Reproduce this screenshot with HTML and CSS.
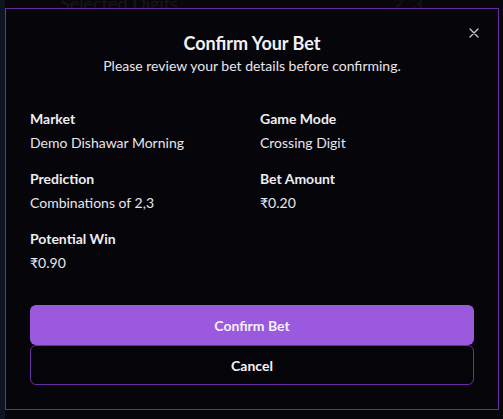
FILE: index.html
```html
<!DOCTYPE html>
<html lang="en">
<head>
<meta charset="utf-8">
<title>Confirm Your Bet</title>
<link rel="stylesheet" href="styles.css">
</head>
<body>
<div class="page">
  <div class="sidebar"></div>
  <div class="content">
    <div class="bg-row">
      <span class="bg-label">Selected Digits</span>
      <span class="bg-value">2, 3</span>
    </div>
  </div>
</div>
<div class="overlay"></div>
<div class="modal" role="dialog">
  <button class="close" aria-label="Close">
    <svg width="10" height="10" viewBox="0 0 10 10"><path d="M1 1L9 9M9 1L1 9" stroke="#c9c9d1" stroke-width="1.3" stroke-linecap="round"/></svg>
  </button>
  <div class="header">
    <h2 class="title">Confirm Your Bet</h2>
    <p class="subtitle">Please review your bet details before confirming.</p>
  </div>
  <div class="details">
    <div class="item"><div class="label">Market</div><div class="value">Demo Dishawar Morning</div></div>
    <div class="item"><div class="label">Game Mode</div><div class="value">Crossing Digit</div></div>
    <div class="item"><div class="label">Prediction</div><div class="value">Combinations of 2,3</div></div>
    <div class="item"><div class="label">Bet Amount</div><div class="value">₹0.20</div></div>
    <div class="item"><div class="label">Potential Win</div><div class="value">₹0.90</div></div>
  </div>
  <div class="actions">
    <button class="btn btn-primary">Confirm Bet</button>
    <button class="btn btn-outline">Cancel</button>
  </div>
</div>
</body>
</html>
```
FILE: styles.css
```css
* { box-sizing: border-box; }
html, body { margin: 0; padding: 0; }
body {
  width: 503px;
  height: 419px;
  overflow: hidden;
  background: #07070b;
  font-family: "Lato", "Noto Sans", sans-serif;
  color: #ececf1;
}
.page {
  display: flex;
  height: 100%;
}
.sidebar {
  width: 5px;
  background: #111827;
}
.content {
  flex: 1;
  background: #09090e;
}
.bg-row {
  display: flex;
  justify-content: space-between;
  padding: 0 80px 0 55px;
  margin-top: -8px;
  font-size: 18px;
  color: #1a1a20;
}
.overlay {
  position: fixed;
  inset: 0;
  background: rgba(0,0,0,0.15);
}
.modal {
  position: fixed;
  left: 5px;
  top: 8px;
  width: 494px;
  height: 402px;
  background: #06050a;
  border: 1px solid #6a2ea3;
  padding: 21px 24px 24px;
  display: flex;
  flex-direction: column;
}
.close {
  position: absolute;
  top: 19px;
  right: 19px;
  background: none;
  border: 0;
  padding: 0;
  width: 10px;
  height: 10px;
  display: flex;
}
.header {
  text-align: center;
}
.title {
  margin: 0;
  font-size: 18px;
  line-height: 26px;
  font-weight: 700;
  color: #f2f0f7;
}
.subtitle {
  margin: 0;
  font-size: 14px;
  line-height: 20px;
  color: #e6e6ec;
}
.details {
  margin-top: 33px;
  display: grid;
  grid-template-columns: 230px 1fr;
  row-gap: 16px;
}
.label {
  font-size: 14px;
  font-weight: 700;
  line-height: 20px;
  color: #ececf1;
}
.value {
  margin-top: 4px;
  font-size: 14px;
  line-height: 20px;
  color: #e6e6ec;
}
.actions {
  margin-top: 32px;
  display: flex;
  flex-direction: column;
}
.btn {
  height: 40px;
  border-radius: 6px;
  font-family: inherit;
  font-size: 14px;
  font-weight: 700;
  color: #f4f2f8;
}
.btn-primary {
  background: #9b59dd;
  border: 0;
}
.btn-outline {
  background: #050408;
  border: 1px solid #6a2ea3;
}
```
